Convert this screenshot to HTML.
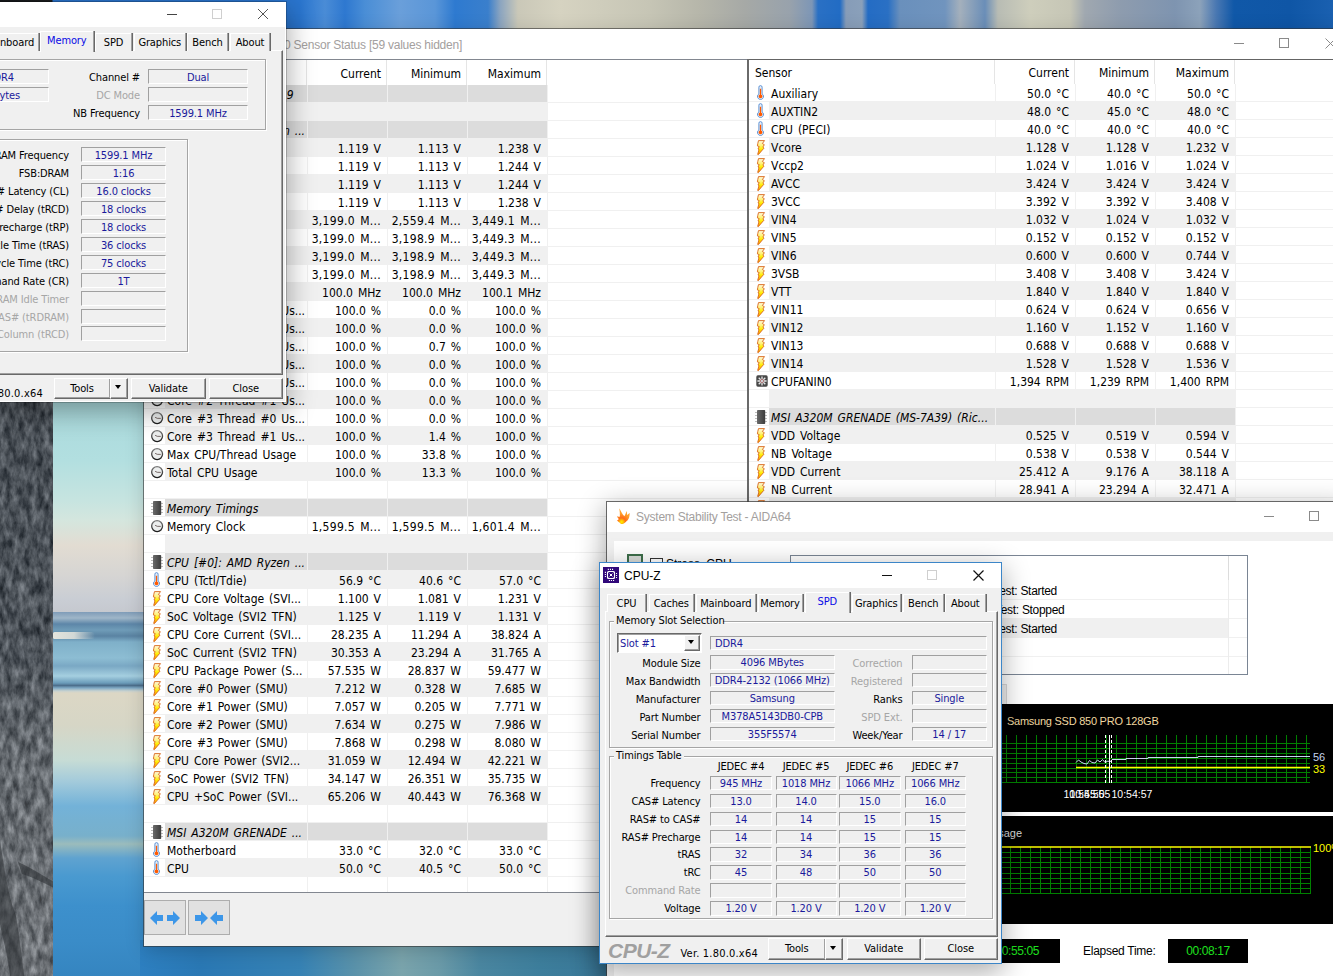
<!DOCTYPE html>
<html lang="en"><head><meta charset="utf-8"><title>Desktop</title>
<style>
html,body{margin:0;padding:0}
body{width:1333px;height:976px;overflow:hidden;position:relative;background:#3a7fb4;font:12px "DejaVu Sans Condensed","Liberation Sans",sans-serif;color:#000;word-spacing:1.5px}
div,span,i,svg,b{position:absolute;box-sizing:border-box;white-space:nowrap}
.ic{overflow:visible}
/* ---------- generic Win10 window ---------- */
.win{background:#fff;box-shadow:0 0 0 1px rgba(60,60,60,.75),0 7px 26px 2px rgba(0,0,0,.33)}
.tbar{left:0;top:0;right:0;height:30px;background:#fff}
.ttl{font:12px "Liberation Sans",sans-serif;color:#a3a09e;word-spacing:0;line-height:16px;letter-spacing:-.24px}
.wmin{width:10px;height:1px;background:#8a8a8a}
.wmax{width:10px;height:10px;border:1px solid #8a8a8a}
.wx{overflow:visible}
.wx path{stroke:#8a8a8a;stroke-width:1;fill:none}
/* ---------- HWiNFO ---------- */
#hw{left:144px;top:29px;width:1200px;height:917px;box-shadow:0 0 0 1px rgba(50,50,50,.6),0 4px 18px 0 rgba(0,0,0,.18)}
#hw .tbar{height:30px}
.lv{background:#fff;overflow:hidden}
#lp{box-shadow:inset 0 1px 0 #828790,inset 0 -1px 0 #828790}
#rp{box-shadow:inset 0 1px 0 #646464}
#rp:after{content:"";position:absolute;left:0;top:0;width:2px;height:100%;background:#6a6a6a}
.hd{left:0;top:1px;right:0}
.hd span{top:0;height:100%;border-right:1px solid #e5e5e5;line-height:28px}
#rp .hd span{line-height:26px}
.hl{padding-left:8px}
.hr{text-align:right;padding-right:5px}
.r{left:0;right:0;height:18px;border-bottom:1px solid #f0f0f0}
.r span{top:0;height:17px;line-height:20px;overflow:hidden}
.c0{padding-left:2px}
.cv{text-align:right;padding-right:7px}
.a span{background:#f0f0f0}
.s span{background:#dcdcdc;border-right:1px solid #f0f0f0}
.vl{width:1px;bottom:1px;background:#f0f0f0}
.s .c0{font-style:italic}
.tb2{left:0;top:864px;right:0;height:53px;background:#f0f0f0}
.tbtn{top:7px;width:42px;height:35px;background:#e1e1e1;border:1px solid #adadad}
.tbtn svg{left:5px;top:8px}
.tbtn path{fill:#3c96e8}
/* ---------- CPU-Z ---------- */
.cz{background:#f0f0f0;color:#000;font-size:11px;word-spacing:0;letter-spacing:-.12px}
.cz .tbar{height:25px}
.f{height:15px;line-height:14.5px;border:1px solid;border-color:#a0a0a0 #fff #fff #a0a0a0;color:#1a1a9c;text-align:center;overflow:hidden;background:#f0f0f0}
.fl{text-align:left;padding-left:4px}
.lb{text-align:right;height:16px;line-height:17px}
.dis{color:#a6a6a6}
.gb{border:1px solid #a5a5a5;box-shadow:1px 1px 0 #fff,inset 1px 1px 0 #fff}
.gbl{background:#f0f0f0;padding:0 2px;height:14px;line-height:14px}
.tab{height:18px;line-height:17px;text-align:center;border-left:1px solid #fff;border-top:1px solid #fff;box-shadow:1px 0 0 #a0a0a0,2px 0 0 #696969;background:#f0f0f0}
.tab.on{color:#0a0ae6;height:21px;line-height:18px;z-index:2}
.tp{border:1px solid;border-color:#fff #696969 #696969 #fff;box-shadow:inset -1px -1px 0 #a0a0a0}
.btn{height:21px;line-height:19px;text-align:center;background:#f0f0f0;border:1px solid;border-color:#fff #696969 #696969 #fff;box-shadow:inset -1px -1px 0 #a0a0a0}
.arr{width:0;height:0;border:3.5px solid transparent;border-top:4px solid #000;border-bottom:0;margin-top:-1px}
/* ---------- Stability test ---------- */
#st{left:607px;top:502px;width:740px;height:490px;background:#f0f0f0;font:12px "Liberation Sans",sans-serif;word-spacing:0}
#st .tbar{height:30px}
.blk{background:#000}
.g{fill:none;stroke:#008000;stroke-width:1;shape-rendering:crispEdges}

.w{letter-spacing:.3px}
#cm .f{line-height:15.5px}

</style></head>
<body>
<svg width="0" height="0" style="position:absolute"><defs>
<linearGradient id="gy" x1="0" y1="0" x2="0" y2="1"><stop offset="0" stop-color="#fffbe0"/><stop offset=".35" stop-color="#fff27a"/><stop offset=".6" stop-color="#ffee00"/><stop offset="1" stop-color="#ff9000"/></linearGradient>
<radialGradient id="gc" cx=".4" cy=".35" r=".8"><stop offset="0" stop-color="#fff"/><stop offset="1" stop-color="#d2d2d2"/></radialGradient>
<linearGradient id="gs" x1="0" y1="0" x2="0" y2="1"><stop offset="0" stop-color="#7a7a7a"/><stop offset="1" stop-color="#1c1c1c"/></linearGradient><linearGradient id="gk" x1="0" y1="0" x2="1" y2="0"><stop offset="0" stop-color="#6a6a6a"/><stop offset="1" stop-color="#3c3c3c"/></linearGradient>
</defs></svg>
<div id="sky" style="left:0;top:0;width:1333px;height:31px;background:linear-gradient(90deg,#16181a 0px,#1c1e20 52px,#2a74cc 53px,#2a76d0 300px,#4a8cd6 325px,#2e78d0 345px,#4a8ed6 365px,#6a9fda 400px,#5a96d8 435px,#2e7ad0 455px,#3a7fcc 488px,#8aa4c0 500px,#cac8b8 518px,#d6d3c1 560px,#cfcdbc 600px,#c6c5b5 650px,#b6b6aa 700px,#a6a9a6 745px,#98a2ac 790px,#7d96b6 812px,#2a70c4 818px,#226cc4 840px,#869cb8 846px,#8aa0ba 862px,#246cc4 868px,#2a70c4 888px,#6a90bc 900px,#7094be 945px,#a4b0bc 960px,#6a8eb8 985px,#b8bcb4 998px,#cecebc 1030px,#c6c6b6 1070px,#a0a8b0 1085px,#8e9cae 1120px,#7e94b0 1175px,#8ca2ba 1200px,#4a78b2 1216px,#1058a8 1234px,#0f56a6 1290px,#1a60b0 1333px)"></div>
<svg id="rock" style="left:0;top:396px" width="54" height="580"><defs><filter id="rk" x="0" y="0" width="100%" height="100%" color-interpolation-filters="sRGB"><feTurbulence type="fractalNoise" baseFrequency="0.16 0.07" numOctaves="4" seed="7"/><feColorMatrix type="matrix" values="1.05 0 0 0 -.185 1.05 0 0 0 -.165 1.05 0 0 0 -.14 0 0 0 0 1"/></filter><linearGradient id="rg" x1="0" y1="0" x2="0" y2="1"><stop offset="0" stop-color="#3a4148"/><stop offset=".45" stop-color="#454c53"/><stop offset=".62" stop-color="#72777b"/><stop offset="1" stop-color="#85888b"/></linearGradient></defs><rect width="54" height="580" fill="url(#rg)"/><rect width="54" height="580" filter="url(#rk)" opacity=".5"/><path d="M0 445C4 470 8 500 16 520C20 545 22 560 24 580H10C8 560 2 540 0 528ZM18 466C28 470 40 478 54 486V492C42 486 30 480 22 478Z" fill="#2c2f33" opacity=".55"/></svg>
<div id="sea" style="left:53px;top:396px;width:93px;height:580px;background:linear-gradient(180deg,#a9d9dc 0,#b2dfe0 64px,#c6e4e0 104px,#d4e6de 124px,#e2dcd2 149px,#d6d5d3 179px,#c9cdd4 204px,#c6c9cf 215.5px,#7f9cb8 216px,#9fb6c8 222px,#5d86a8 228px,#6f9cb8 234px,#5a83a2 240px,#7fb0c9 246px,#8dbdd3 262px,#7aa8c4 270px,#a5cfe0 280px,#6b9cba 287px,#4d6f8c 289.5px,#7fa9c4 292px,#c8d2d0 295px,#dcd7c5 297px,#d6d6c6 330px,#c7dcd5 364px,#a4cbdb 385px,#73b2d8 410px,#78b0cb 440px,#9bbcbc 448px,#5fa3d0 462px,#4a9ad0 480px,#3d90cc 510px,#3a8cc8 545px,#3585c0 580px)"><div style="left:0;top:236px;width:42px;height:7px;border-radius:2px 5px 4px 2px;background:linear-gradient(90deg,#e4e4dc,#d2d8d6 50%,rgba(130,165,188,0))"></div></div>
<div id="bot" style="left:140px;top:940px;width:480px;height:36px;background:linear-gradient(90deg,#2d7fc0 0,#2a78b4 60px,#3682b4 160px,#5a92aa 215px,#7aa4ac 262px,#6a9aa8 300px,#4a86a0 340px,#3d7e9c 400px,#3a7898 460px)"></div>
<div id="hw" class="win">
<div class="tbar"><span class="ttl" id="hwt" style="right:882px;top:8px">HWiNFO64 v5.60-3250 Sensor Status [59 values hidden]</span><i class="wmin" style="left:1090px;top:14px"></i><i class="wmax" style="left:1135px;top:9px"></i><svg class="wx" style="left:1181px;top:9px" width="11" height="11"><path d="M0.5 0.5L10.5 10.5M10.5 0.5L0.5 10.5"/></svg></div>
<div id="lp" class="lv" style="left:0px;top:30px;width:603px;height:834px">
<div class="hd" style="height:25px"><span class="hl" style="left:0px;width:163px"></span><span class="hr" style="left:163px;width:80px">Current</span><span class="hr" style="left:243px;width:80px">Minimum</span><span class="hr" style="left:323px;width:80px">Maximum</span></div>
<i class="vl" style="left:163px;top:26px"></i><i class="vl" style="left:243px;top:26px"></i><i class="vl" style="left:323px;top:26px"></i><i class="vl" style="left:403px;top:26px"></i>
<div class="r s" style="top:26px"><svg class="ic" style="left:7px;top:2px" width="12" height="14" viewBox="0 0 12 14"><path d="M0 2.5H12M0 5.5H12M0 8.5H12M0 11.5H12" stroke="#bdbdbd" stroke-width="1"/><rect x="2" y="0" width="8.2" height="14" rx=".8" fill="url(#gk)"/></svg><span class="c0" style="left:21px;width:143px;letter-spacing:.3px">System: MSI MS-7A39</span><span class="cv" style="left:164px;width:80px"></span><span class="cv" style="left:244px;width:80px"></span><span class="cv" style="left:324px;width:80px"></span></div>
<div class="r a" style="top:44px"><span class="c0" style="left:21px;width:143px"></span><span class="cv" style="left:164px;width:80px"></span><span class="cv" style="left:244px;width:80px"></span><span class="cv" style="left:324px;width:80px"></span></div>
<div class="r s" style="top:62px"><svg class="ic" style="left:7px;top:2px" width="12" height="14" viewBox="0 0 12 14"><path d="M0 2.5H12M0 5.5H12M0 8.5H12M0 11.5H12" stroke="#bdbdbd" stroke-width="1"/><rect x="2" y="0" width="8.2" height="14" rx=".8" fill="url(#gk)"/></svg><span class="c0" style="left:21px;width:143px">CPU [#0]: AMD Ryzen ...</span><span class="cv" style="left:164px;width:80px"></span><span class="cv" style="left:244px;width:80px"></span><span class="cv" style="left:324px;width:80px"></span></div>
<div class="r a" style="top:80px"><svg class="ic" style="left:9px;top:2px" width="8" height="15" viewBox="0 0 8 15"><path d="M1.5 .6H7.5L5.4 3.5L7.3 4.7L5.9 7L6.9 8.2L1.4 14.6L.7 14.4L2 9.5L1 9L2.2 6.6L.4 5.9L.8 3.4Z" fill="url(#gy)" stroke="#d8651a" stroke-width=".9" stroke-linejoin="round"/></svg><span class="c0" style="left:21px;width:143px">Core #0 VID</span><span class="cv" style="left:164px;width:80px">1.119 V</span><span class="cv" style="left:244px;width:80px">1.113 V</span><span class="cv" style="left:324px;width:80px">1.238 V</span></div>
<div class="r" style="top:98px"><svg class="ic" style="left:9px;top:2px" width="8" height="15" viewBox="0 0 8 15"><path d="M1.5 .6H7.5L5.4 3.5L7.3 4.7L5.9 7L6.9 8.2L1.4 14.6L.7 14.4L2 9.5L1 9L2.2 6.6L.4 5.9L.8 3.4Z" fill="url(#gy)" stroke="#d8651a" stroke-width=".9" stroke-linejoin="round"/></svg><span class="c0" style="left:21px;width:143px">Core #1 VID</span><span class="cv" style="left:164px;width:80px">1.119 V</span><span class="cv" style="left:244px;width:80px">1.113 V</span><span class="cv" style="left:324px;width:80px">1.244 V</span></div>
<div class="r a" style="top:116px"><svg class="ic" style="left:9px;top:2px" width="8" height="15" viewBox="0 0 8 15"><path d="M1.5 .6H7.5L5.4 3.5L7.3 4.7L5.9 7L6.9 8.2L1.4 14.6L.7 14.4L2 9.5L1 9L2.2 6.6L.4 5.9L.8 3.4Z" fill="url(#gy)" stroke="#d8651a" stroke-width=".9" stroke-linejoin="round"/></svg><span class="c0" style="left:21px;width:143px">Core #2 VID</span><span class="cv" style="left:164px;width:80px">1.119 V</span><span class="cv" style="left:244px;width:80px">1.113 V</span><span class="cv" style="left:324px;width:80px">1.244 V</span></div>
<div class="r" style="top:134px"><svg class="ic" style="left:9px;top:2px" width="8" height="15" viewBox="0 0 8 15"><path d="M1.5 .6H7.5L5.4 3.5L7.3 4.7L5.9 7L6.9 8.2L1.4 14.6L.7 14.4L2 9.5L1 9L2.2 6.6L.4 5.9L.8 3.4Z" fill="url(#gy)" stroke="#d8651a" stroke-width=".9" stroke-linejoin="round"/></svg><span class="c0" style="left:21px;width:143px">Core #3 VID</span><span class="cv" style="left:164px;width:80px">1.119 V</span><span class="cv" style="left:244px;width:80px">1.113 V</span><span class="cv" style="left:324px;width:80px">1.238 V</span></div>
<div class="r a" style="top:152px"><svg class="ic" style="left:7px;top:3px" width="13" height="13" viewBox="0 0 13 13"><circle cx="6.1" cy="6.1" r="5.45" fill="#eceeee" stroke="url(#gs)" stroke-width="1.3"/><path d="M4.1 5.3L6.2 6.3L9.8 6.4" fill="none" stroke="#6a5a58" stroke-width=".9"/></svg><span class="c0" style="left:21px;width:143px">Core #0 Clock</span><span class="cv w" style="left:164px;width:80px">3,199.0 M...</span><span class="cv w" style="left:244px;width:80px">2,559.4 M...</span><span class="cv w" style="left:324px;width:80px">3,449.1 M...</span></div>
<div class="r" style="top:170px"><svg class="ic" style="left:7px;top:3px" width="13" height="13" viewBox="0 0 13 13"><circle cx="6.1" cy="6.1" r="5.45" fill="#eceeee" stroke="url(#gs)" stroke-width="1.3"/><path d="M4.1 5.3L6.2 6.3L9.8 6.4" fill="none" stroke="#6a5a58" stroke-width=".9"/></svg><span class="c0" style="left:21px;width:143px">Core #1 Clock</span><span class="cv w" style="left:164px;width:80px">3,199.0 M...</span><span class="cv w" style="left:244px;width:80px">3,198.9 M...</span><span class="cv w" style="left:324px;width:80px">3,449.3 M...</span></div>
<div class="r a" style="top:188px"><svg class="ic" style="left:7px;top:3px" width="13" height="13" viewBox="0 0 13 13"><circle cx="6.1" cy="6.1" r="5.45" fill="#eceeee" stroke="url(#gs)" stroke-width="1.3"/><path d="M4.1 5.3L6.2 6.3L9.8 6.4" fill="none" stroke="#6a5a58" stroke-width=".9"/></svg><span class="c0" style="left:21px;width:143px">Core #2 Clock</span><span class="cv w" style="left:164px;width:80px">3,199.0 M...</span><span class="cv w" style="left:244px;width:80px">3,198.9 M...</span><span class="cv w" style="left:324px;width:80px">3,449.3 M...</span></div>
<div class="r" style="top:206px"><svg class="ic" style="left:7px;top:3px" width="13" height="13" viewBox="0 0 13 13"><circle cx="6.1" cy="6.1" r="5.45" fill="#eceeee" stroke="url(#gs)" stroke-width="1.3"/><path d="M4.1 5.3L6.2 6.3L9.8 6.4" fill="none" stroke="#6a5a58" stroke-width=".9"/></svg><span class="c0" style="left:21px;width:143px">Core #3 Clock</span><span class="cv w" style="left:164px;width:80px">3,199.0 M...</span><span class="cv w" style="left:244px;width:80px">3,198.9 M...</span><span class="cv w" style="left:324px;width:80px">3,449.3 M...</span></div>
<div class="r a" style="top:224px"><svg class="ic" style="left:7px;top:3px" width="13" height="13" viewBox="0 0 13 13"><circle cx="6.1" cy="6.1" r="5.45" fill="#eceeee" stroke="url(#gs)" stroke-width="1.3"/><path d="M4.1 5.3L6.2 6.3L9.8 6.4" fill="none" stroke="#6a5a58" stroke-width=".9"/></svg><span class="c0" style="left:21px;width:143px">Bus Clock</span><span class="cv" style="left:164px;width:80px">100.0 MHz</span><span class="cv" style="left:244px;width:80px">100.0 MHz</span><span class="cv" style="left:324px;width:80px">100.1 MHz</span></div>
<div class="r" style="top:242px"><svg class="ic" style="left:7px;top:3px" width="13" height="13" viewBox="0 0 13 13"><circle cx="6.1" cy="6.1" r="5.45" fill="#eceeee" stroke="url(#gs)" stroke-width="1.3"/><path d="M4.1 5.3L6.2 6.3L9.8 6.4" fill="none" stroke="#6a5a58" stroke-width=".9"/></svg><span class="c0" style="left:21px;width:143px">Core #0 Thread #0 Us...</span><span class="cv" style="left:164px;width:80px">100.0 %</span><span class="cv" style="left:244px;width:80px">0.0 %</span><span class="cv" style="left:324px;width:80px">100.0 %</span></div>
<div class="r a" style="top:260px"><svg class="ic" style="left:7px;top:3px" width="13" height="13" viewBox="0 0 13 13"><circle cx="6.1" cy="6.1" r="5.45" fill="#eceeee" stroke="url(#gs)" stroke-width="1.3"/><path d="M4.1 5.3L6.2 6.3L9.8 6.4" fill="none" stroke="#6a5a58" stroke-width=".9"/></svg><span class="c0" style="left:21px;width:143px">Core #0 Thread #1 Us...</span><span class="cv" style="left:164px;width:80px">100.0 %</span><span class="cv" style="left:244px;width:80px">0.0 %</span><span class="cv" style="left:324px;width:80px">100.0 %</span></div>
<div class="r" style="top:278px"><svg class="ic" style="left:7px;top:3px" width="13" height="13" viewBox="0 0 13 13"><circle cx="6.1" cy="6.1" r="5.45" fill="#eceeee" stroke="url(#gs)" stroke-width="1.3"/><path d="M4.1 5.3L6.2 6.3L9.8 6.4" fill="none" stroke="#6a5a58" stroke-width=".9"/></svg><span class="c0" style="left:21px;width:143px">Core #1 Thread #0 Us...</span><span class="cv" style="left:164px;width:80px">100.0 %</span><span class="cv" style="left:244px;width:80px">0.7 %</span><span class="cv" style="left:324px;width:80px">100.0 %</span></div>
<div class="r a" style="top:296px"><svg class="ic" style="left:7px;top:3px" width="13" height="13" viewBox="0 0 13 13"><circle cx="6.1" cy="6.1" r="5.45" fill="#eceeee" stroke="url(#gs)" stroke-width="1.3"/><path d="M4.1 5.3L6.2 6.3L9.8 6.4" fill="none" stroke="#6a5a58" stroke-width=".9"/></svg><span class="c0" style="left:21px;width:143px">Core #1 Thread #1 Us...</span><span class="cv" style="left:164px;width:80px">100.0 %</span><span class="cv" style="left:244px;width:80px">0.0 %</span><span class="cv" style="left:324px;width:80px">100.0 %</span></div>
<div class="r" style="top:314px"><svg class="ic" style="left:7px;top:3px" width="13" height="13" viewBox="0 0 13 13"><circle cx="6.1" cy="6.1" r="5.45" fill="#eceeee" stroke="url(#gs)" stroke-width="1.3"/><path d="M4.1 5.3L6.2 6.3L9.8 6.4" fill="none" stroke="#6a5a58" stroke-width=".9"/></svg><span class="c0" style="left:21px;width:143px">Core #2 Thread #0 Us...</span><span class="cv" style="left:164px;width:80px">100.0 %</span><span class="cv" style="left:244px;width:80px">0.0 %</span><span class="cv" style="left:324px;width:80px">100.0 %</span></div>
<div class="r a" style="top:332px"><svg class="ic" style="left:7px;top:3px" width="13" height="13" viewBox="0 0 13 13"><circle cx="6.1" cy="6.1" r="5.45" fill="#eceeee" stroke="url(#gs)" stroke-width="1.3"/><path d="M4.1 5.3L6.2 6.3L9.8 6.4" fill="none" stroke="#6a5a58" stroke-width=".9"/></svg><span class="c0" style="left:21px;width:143px">Core #2 Thread #1 Us...</span><span class="cv" style="left:164px;width:80px">100.0 %</span><span class="cv" style="left:244px;width:80px">0.0 %</span><span class="cv" style="left:324px;width:80px">100.0 %</span></div>
<div class="r" style="top:350px"><svg class="ic" style="left:7px;top:3px" width="13" height="13" viewBox="0 0 13 13"><circle cx="6.1" cy="6.1" r="5.45" fill="#eceeee" stroke="url(#gs)" stroke-width="1.3"/><path d="M4.1 5.3L6.2 6.3L9.8 6.4" fill="none" stroke="#6a5a58" stroke-width=".9"/></svg><span class="c0" style="left:21px;width:143px">Core #3 Thread #0 Us...</span><span class="cv" style="left:164px;width:80px">100.0 %</span><span class="cv" style="left:244px;width:80px">0.0 %</span><span class="cv" style="left:324px;width:80px">100.0 %</span></div>
<div class="r a" style="top:368px"><svg class="ic" style="left:7px;top:3px" width="13" height="13" viewBox="0 0 13 13"><circle cx="6.1" cy="6.1" r="5.45" fill="#eceeee" stroke="url(#gs)" stroke-width="1.3"/><path d="M4.1 5.3L6.2 6.3L9.8 6.4" fill="none" stroke="#6a5a58" stroke-width=".9"/></svg><span class="c0" style="left:21px;width:143px">Core #3 Thread #1 Us...</span><span class="cv" style="left:164px;width:80px">100.0 %</span><span class="cv" style="left:244px;width:80px">1.4 %</span><span class="cv" style="left:324px;width:80px">100.0 %</span></div>
<div class="r" style="top:386px"><svg class="ic" style="left:7px;top:3px" width="13" height="13" viewBox="0 0 13 13"><circle cx="6.1" cy="6.1" r="5.45" fill="#eceeee" stroke="url(#gs)" stroke-width="1.3"/><path d="M4.1 5.3L6.2 6.3L9.8 6.4" fill="none" stroke="#6a5a58" stroke-width=".9"/></svg><span class="c0" style="left:21px;width:143px">Max CPU/Thread Usage</span><span class="cv" style="left:164px;width:80px">100.0 %</span><span class="cv" style="left:244px;width:80px">33.8 %</span><span class="cv" style="left:324px;width:80px">100.0 %</span></div>
<div class="r a" style="top:404px"><svg class="ic" style="left:7px;top:3px" width="13" height="13" viewBox="0 0 13 13"><circle cx="6.1" cy="6.1" r="5.45" fill="#eceeee" stroke="url(#gs)" stroke-width="1.3"/><path d="M4.1 5.3L6.2 6.3L9.8 6.4" fill="none" stroke="#6a5a58" stroke-width=".9"/></svg><span class="c0" style="left:21px;width:143px">Total CPU Usage</span><span class="cv" style="left:164px;width:80px">100.0 %</span><span class="cv" style="left:244px;width:80px">13.3 %</span><span class="cv" style="left:324px;width:80px">100.0 %</span></div>
<div class="r" style="top:422px"><span class="c0" style="left:21px;width:143px"></span><span class="cv" style="left:164px;width:80px"></span><span class="cv" style="left:244px;width:80px"></span><span class="cv" style="left:324px;width:80px"></span></div>
<div class="r s" style="top:440px"><svg class="ic" style="left:7px;top:2px" width="12" height="14" viewBox="0 0 12 14"><path d="M0 2.5H12M0 5.5H12M0 8.5H12M0 11.5H12" stroke="#bdbdbd" stroke-width="1"/><rect x="2" y="0" width="8.2" height="14" rx=".8" fill="url(#gk)"/></svg><span class="c0" style="left:21px;width:143px">Memory Timings</span><span class="cv" style="left:164px;width:80px"></span><span class="cv" style="left:244px;width:80px"></span><span class="cv" style="left:324px;width:80px"></span></div>
<div class="r" style="top:458px"><svg class="ic" style="left:7px;top:3px" width="13" height="13" viewBox="0 0 13 13"><circle cx="6.1" cy="6.1" r="5.45" fill="#eceeee" stroke="url(#gs)" stroke-width="1.3"/><path d="M4.1 5.3L6.2 6.3L9.8 6.4" fill="none" stroke="#6a5a58" stroke-width=".9"/></svg><span class="c0" style="left:21px;width:143px">Memory Clock</span><span class="cv w" style="left:164px;width:80px">1,599.5 M...</span><span class="cv w" style="left:244px;width:80px">1,599.5 M...</span><span class="cv w" style="left:324px;width:80px">1,601.4 M...</span></div>
<div class="r a" style="top:476px"><span class="c0" style="left:21px;width:143px"></span><span class="cv" style="left:164px;width:80px"></span><span class="cv" style="left:244px;width:80px"></span><span class="cv" style="left:324px;width:80px"></span></div>
<div class="r s" style="top:494px"><svg class="ic" style="left:7px;top:2px" width="12" height="14" viewBox="0 0 12 14"><path d="M0 2.5H12M0 5.5H12M0 8.5H12M0 11.5H12" stroke="#bdbdbd" stroke-width="1"/><rect x="2" y="0" width="8.2" height="14" rx=".8" fill="url(#gk)"/></svg><span class="c0" style="left:21px;width:143px">CPU [#0]: AMD Ryzen ...</span><span class="cv" style="left:164px;width:80px"></span><span class="cv" style="left:244px;width:80px"></span><span class="cv" style="left:324px;width:80px"></span></div>
<div class="r a" style="top:512px"><svg class="ic" style="left:9px;top:1px" width="7" height="15" viewBox="0 0 7 15"><path d="M1.9 2.2a1.6 1.6 0 0 1 3.2 0V8.9a3 3 0 1 1-3.2 0Z" fill="#e6effa" stroke="#5f93d4" stroke-width="1"/><path d="M2.9 3.8h1.2v5.8a1.9 1.9 0 1 1-1.2 0Z" fill="#ff5a00"/></svg><span class="c0" style="left:21px;width:143px">CPU (Tctl/Tdie)</span><span class="cv" style="left:164px;width:80px">56.9 °C</span><span class="cv" style="left:244px;width:80px">40.6 °C</span><span class="cv" style="left:324px;width:80px">57.0 °C</span></div>
<div class="r" style="top:530px"><svg class="ic" style="left:9px;top:2px" width="8" height="15" viewBox="0 0 8 15"><path d="M1.5 .6H7.5L5.4 3.5L7.3 4.7L5.9 7L6.9 8.2L1.4 14.6L.7 14.4L2 9.5L1 9L2.2 6.6L.4 5.9L.8 3.4Z" fill="url(#gy)" stroke="#d8651a" stroke-width=".9" stroke-linejoin="round"/></svg><span class="c0" style="left:21px;width:143px">CPU Core Voltage (SVI...</span><span class="cv" style="left:164px;width:80px">1.100 V</span><span class="cv" style="left:244px;width:80px">1.081 V</span><span class="cv" style="left:324px;width:80px">1.231 V</span></div>
<div class="r a" style="top:548px"><svg class="ic" style="left:9px;top:2px" width="8" height="15" viewBox="0 0 8 15"><path d="M1.5 .6H7.5L5.4 3.5L7.3 4.7L5.9 7L6.9 8.2L1.4 14.6L.7 14.4L2 9.5L1 9L2.2 6.6L.4 5.9L.8 3.4Z" fill="url(#gy)" stroke="#d8651a" stroke-width=".9" stroke-linejoin="round"/></svg><span class="c0" style="left:21px;width:143px">SoC Voltage (SVI2 TFN)</span><span class="cv" style="left:164px;width:80px">1.125 V</span><span class="cv" style="left:244px;width:80px">1.119 V</span><span class="cv" style="left:324px;width:80px">1.131 V</span></div>
<div class="r" style="top:566px"><svg class="ic" style="left:9px;top:2px" width="8" height="15" viewBox="0 0 8 15"><path d="M1.5 .6H7.5L5.4 3.5L7.3 4.7L5.9 7L6.9 8.2L1.4 14.6L.7 14.4L2 9.5L1 9L2.2 6.6L.4 5.9L.8 3.4Z" fill="url(#gy)" stroke="#d8651a" stroke-width=".9" stroke-linejoin="round"/></svg><span class="c0" style="left:21px;width:143px">CPU Core Current (SVI...</span><span class="cv" style="left:164px;width:80px">28.235 A</span><span class="cv" style="left:244px;width:80px">11.294 A</span><span class="cv" style="left:324px;width:80px">38.824 A</span></div>
<div class="r a" style="top:584px"><svg class="ic" style="left:9px;top:2px" width="8" height="15" viewBox="0 0 8 15"><path d="M1.5 .6H7.5L5.4 3.5L7.3 4.7L5.9 7L6.9 8.2L1.4 14.6L.7 14.4L2 9.5L1 9L2.2 6.6L.4 5.9L.8 3.4Z" fill="url(#gy)" stroke="#d8651a" stroke-width=".9" stroke-linejoin="round"/></svg><span class="c0" style="left:21px;width:143px">SoC Current (SVI2 TFN)</span><span class="cv" style="left:164px;width:80px">30.353 A</span><span class="cv" style="left:244px;width:80px">23.294 A</span><span class="cv" style="left:324px;width:80px">31.765 A</span></div>
<div class="r" style="top:602px"><svg class="ic" style="left:9px;top:2px" width="8" height="15" viewBox="0 0 8 15"><path d="M1.5 .6H7.5L5.4 3.5L7.3 4.7L5.9 7L6.9 8.2L1.4 14.6L.7 14.4L2 9.5L1 9L2.2 6.6L.4 5.9L.8 3.4Z" fill="url(#gy)" stroke="#d8651a" stroke-width=".9" stroke-linejoin="round"/></svg><span class="c0" style="left:21px;width:143px">CPU Package Power (S...</span><span class="cv" style="left:164px;width:80px">57.535 W</span><span class="cv" style="left:244px;width:80px">28.837 W</span><span class="cv" style="left:324px;width:80px">59.477 W</span></div>
<div class="r a" style="top:620px"><svg class="ic" style="left:9px;top:2px" width="8" height="15" viewBox="0 0 8 15"><path d="M1.5 .6H7.5L5.4 3.5L7.3 4.7L5.9 7L6.9 8.2L1.4 14.6L.7 14.4L2 9.5L1 9L2.2 6.6L.4 5.9L.8 3.4Z" fill="url(#gy)" stroke="#d8651a" stroke-width=".9" stroke-linejoin="round"/></svg><span class="c0" style="left:21px;width:143px">Core #0 Power (SMU)</span><span class="cv" style="left:164px;width:80px">7.212 W</span><span class="cv" style="left:244px;width:80px">0.328 W</span><span class="cv" style="left:324px;width:80px">7.685 W</span></div>
<div class="r" style="top:638px"><svg class="ic" style="left:9px;top:2px" width="8" height="15" viewBox="0 0 8 15"><path d="M1.5 .6H7.5L5.4 3.5L7.3 4.7L5.9 7L6.9 8.2L1.4 14.6L.7 14.4L2 9.5L1 9L2.2 6.6L.4 5.9L.8 3.4Z" fill="url(#gy)" stroke="#d8651a" stroke-width=".9" stroke-linejoin="round"/></svg><span class="c0" style="left:21px;width:143px">Core #1 Power (SMU)</span><span class="cv" style="left:164px;width:80px">7.057 W</span><span class="cv" style="left:244px;width:80px">0.205 W</span><span class="cv" style="left:324px;width:80px">7.771 W</span></div>
<div class="r a" style="top:656px"><svg class="ic" style="left:9px;top:2px" width="8" height="15" viewBox="0 0 8 15"><path d="M1.5 .6H7.5L5.4 3.5L7.3 4.7L5.9 7L6.9 8.2L1.4 14.6L.7 14.4L2 9.5L1 9L2.2 6.6L.4 5.9L.8 3.4Z" fill="url(#gy)" stroke="#d8651a" stroke-width=".9" stroke-linejoin="round"/></svg><span class="c0" style="left:21px;width:143px">Core #2 Power (SMU)</span><span class="cv" style="left:164px;width:80px">7.634 W</span><span class="cv" style="left:244px;width:80px">0.275 W</span><span class="cv" style="left:324px;width:80px">7.986 W</span></div>
<div class="r" style="top:674px"><svg class="ic" style="left:9px;top:2px" width="8" height="15" viewBox="0 0 8 15"><path d="M1.5 .6H7.5L5.4 3.5L7.3 4.7L5.9 7L6.9 8.2L1.4 14.6L.7 14.4L2 9.5L1 9L2.2 6.6L.4 5.9L.8 3.4Z" fill="url(#gy)" stroke="#d8651a" stroke-width=".9" stroke-linejoin="round"/></svg><span class="c0" style="left:21px;width:143px">Core #3 Power (SMU)</span><span class="cv" style="left:164px;width:80px">7.868 W</span><span class="cv" style="left:244px;width:80px">0.298 W</span><span class="cv" style="left:324px;width:80px">8.080 W</span></div>
<div class="r a" style="top:692px"><svg class="ic" style="left:9px;top:2px" width="8" height="15" viewBox="0 0 8 15"><path d="M1.5 .6H7.5L5.4 3.5L7.3 4.7L5.9 7L6.9 8.2L1.4 14.6L.7 14.4L2 9.5L1 9L2.2 6.6L.4 5.9L.8 3.4Z" fill="url(#gy)" stroke="#d8651a" stroke-width=".9" stroke-linejoin="round"/></svg><span class="c0" style="left:21px;width:143px">CPU Core Power (SVI2...</span><span class="cv" style="left:164px;width:80px">31.059 W</span><span class="cv" style="left:244px;width:80px">12.494 W</span><span class="cv" style="left:324px;width:80px">42.221 W</span></div>
<div class="r" style="top:710px"><svg class="ic" style="left:9px;top:2px" width="8" height="15" viewBox="0 0 8 15"><path d="M1.5 .6H7.5L5.4 3.5L7.3 4.7L5.9 7L6.9 8.2L1.4 14.6L.7 14.4L2 9.5L1 9L2.2 6.6L.4 5.9L.8 3.4Z" fill="url(#gy)" stroke="#d8651a" stroke-width=".9" stroke-linejoin="round"/></svg><span class="c0" style="left:21px;width:143px">SoC Power (SVI2 TFN)</span><span class="cv" style="left:164px;width:80px">34.147 W</span><span class="cv" style="left:244px;width:80px">26.351 W</span><span class="cv" style="left:324px;width:80px">35.735 W</span></div>
<div class="r a" style="top:728px"><svg class="ic" style="left:9px;top:2px" width="8" height="15" viewBox="0 0 8 15"><path d="M1.5 .6H7.5L5.4 3.5L7.3 4.7L5.9 7L6.9 8.2L1.4 14.6L.7 14.4L2 9.5L1 9L2.2 6.6L.4 5.9L.8 3.4Z" fill="url(#gy)" stroke="#d8651a" stroke-width=".9" stroke-linejoin="round"/></svg><span class="c0" style="left:21px;width:143px">CPU +SoC Power (SVI...</span><span class="cv" style="left:164px;width:80px">65.206 W</span><span class="cv" style="left:244px;width:80px">40.443 W</span><span class="cv" style="left:324px;width:80px">76.368 W</span></div>
<div class="r" style="top:746px"><span class="c0" style="left:21px;width:143px"></span><span class="cv" style="left:164px;width:80px"></span><span class="cv" style="left:244px;width:80px"></span><span class="cv" style="left:324px;width:80px"></span></div>
<div class="r s" style="top:764px"><svg class="ic" style="left:7px;top:2px" width="12" height="14" viewBox="0 0 12 14"><path d="M0 2.5H12M0 5.5H12M0 8.5H12M0 11.5H12" stroke="#bdbdbd" stroke-width="1"/><rect x="2" y="0" width="8.2" height="14" rx=".8" fill="url(#gk)"/></svg><span class="c0" style="left:21px;width:143px">MSI A320M GRENADE ...</span><span class="cv" style="left:164px;width:80px"></span><span class="cv" style="left:244px;width:80px"></span><span class="cv" style="left:324px;width:80px"></span></div>
<div class="r" style="top:782px"><svg class="ic" style="left:9px;top:1px" width="7" height="15" viewBox="0 0 7 15"><path d="M1.9 2.2a1.6 1.6 0 0 1 3.2 0V8.9a3 3 0 1 1-3.2 0Z" fill="#e6effa" stroke="#5f93d4" stroke-width="1"/><path d="M2.9 3.8h1.2v5.8a1.9 1.9 0 1 1-1.2 0Z" fill="#ff5a00"/></svg><span class="c0" style="left:21px;width:143px">Motherboard</span><span class="cv" style="left:164px;width:80px">33.0 °C</span><span class="cv" style="left:244px;width:80px">32.0 °C</span><span class="cv" style="left:324px;width:80px">33.0 °C</span></div>
<div class="r a" style="top:800px"><svg class="ic" style="left:9px;top:1px" width="7" height="15" viewBox="0 0 7 15"><path d="M1.9 2.2a1.6 1.6 0 0 1 3.2 0V8.9a3 3 0 1 1-3.2 0Z" fill="#e6effa" stroke="#5f93d4" stroke-width="1"/><path d="M2.9 3.8h1.2v5.8a1.9 1.9 0 1 1-1.2 0Z" fill="#ff5a00"/></svg><span class="c0" style="left:21px;width:143px">CPU</span><span class="cv" style="left:164px;width:80px">50.0 °C</span><span class="cv" style="left:244px;width:80px">40.5 °C</span><span class="cv" style="left:324px;width:80px">50.0 °C</span></div>
<div class="r" style="top:818px"><span class="c0" style="left:21px;width:143px"></span><span class="cv" style="left:164px;width:80px"></span><span class="cv" style="left:244px;width:80px"></span><span class="cv" style="left:324px;width:80px"></span></div>
</div>
<div id="rp" class="lv" style="left:603px;top:30px;width:601px;height:834px">
<div class="hd" style="height:24px"><span class="hl" style="left:0px;width:248px">Sensor</span><span class="hr" style="left:248px;width:80px">Current</span><span class="hr" style="left:328px;width:80px">Minimum</span><span class="hr" style="left:408px;width:80px">Maximum</span></div>
<i class="vl" style="left:248px;top:25px"></i><i class="vl" style="left:328px;top:25px"></i><i class="vl" style="left:408px;top:25px"></i><i class="vl" style="left:488px;top:25px"></i>
<div class="r" style="top:25px"><svg class="ic" style="left:10px;top:1px" width="7" height="15" viewBox="0 0 7 15"><path d="M1.9 2.2a1.6 1.6 0 0 1 3.2 0V8.9a3 3 0 1 1-3.2 0Z" fill="#e6effa" stroke="#5f93d4" stroke-width="1"/><path d="M2.9 3.8h1.2v5.8a1.9 1.9 0 1 1-1.2 0Z" fill="#ff5a00"/></svg><span class="c0" style="left:22px;width:227px">Auxiliary</span><span class="cv" style="left:249px;width:80px">50.0 °C</span><span class="cv" style="left:329px;width:80px">40.0 °C</span><span class="cv" style="left:409px;width:80px">50.0 °C</span></div>
<div class="r a" style="top:43px"><svg class="ic" style="left:10px;top:1px" width="7" height="15" viewBox="0 0 7 15"><path d="M1.9 2.2a1.6 1.6 0 0 1 3.2 0V8.9a3 3 0 1 1-3.2 0Z" fill="#e6effa" stroke="#5f93d4" stroke-width="1"/><path d="M2.9 3.8h1.2v5.8a1.9 1.9 0 1 1-1.2 0Z" fill="#ff5a00"/></svg><span class="c0" style="left:22px;width:227px">AUXTIN2</span><span class="cv" style="left:249px;width:80px">48.0 °C</span><span class="cv" style="left:329px;width:80px">45.0 °C</span><span class="cv" style="left:409px;width:80px">48.0 °C</span></div>
<div class="r" style="top:61px"><svg class="ic" style="left:10px;top:1px" width="7" height="15" viewBox="0 0 7 15"><path d="M1.9 2.2a1.6 1.6 0 0 1 3.2 0V8.9a3 3 0 1 1-3.2 0Z" fill="#e6effa" stroke="#5f93d4" stroke-width="1"/><path d="M2.9 3.8h1.2v5.8a1.9 1.9 0 1 1-1.2 0Z" fill="#ff5a00"/></svg><span class="c0" style="left:22px;width:227px">CPU (PECI)</span><span class="cv" style="left:249px;width:80px">40.0 °C</span><span class="cv" style="left:329px;width:80px">40.0 °C</span><span class="cv" style="left:409px;width:80px">40.0 °C</span></div>
<div class="r a" style="top:79px"><svg class="ic" style="left:10px;top:2px" width="8" height="15" viewBox="0 0 8 15"><path d="M1.5 .6H7.5L5.4 3.5L7.3 4.7L5.9 7L6.9 8.2L1.4 14.6L.7 14.4L2 9.5L1 9L2.2 6.6L.4 5.9L.8 3.4Z" fill="url(#gy)" stroke="#d8651a" stroke-width=".9" stroke-linejoin="round"/></svg><span class="c0" style="left:22px;width:227px">Vcore</span><span class="cv" style="left:249px;width:80px">1.128 V</span><span class="cv" style="left:329px;width:80px">1.128 V</span><span class="cv" style="left:409px;width:80px">1.232 V</span></div>
<div class="r" style="top:97px"><svg class="ic" style="left:10px;top:2px" width="8" height="15" viewBox="0 0 8 15"><path d="M1.5 .6H7.5L5.4 3.5L7.3 4.7L5.9 7L6.9 8.2L1.4 14.6L.7 14.4L2 9.5L1 9L2.2 6.6L.4 5.9L.8 3.4Z" fill="url(#gy)" stroke="#d8651a" stroke-width=".9" stroke-linejoin="round"/></svg><span class="c0" style="left:22px;width:227px">Vccp2</span><span class="cv" style="left:249px;width:80px">1.024 V</span><span class="cv" style="left:329px;width:80px">1.016 V</span><span class="cv" style="left:409px;width:80px">1.024 V</span></div>
<div class="r a" style="top:115px"><svg class="ic" style="left:10px;top:2px" width="8" height="15" viewBox="0 0 8 15"><path d="M1.5 .6H7.5L5.4 3.5L7.3 4.7L5.9 7L6.9 8.2L1.4 14.6L.7 14.4L2 9.5L1 9L2.2 6.6L.4 5.9L.8 3.4Z" fill="url(#gy)" stroke="#d8651a" stroke-width=".9" stroke-linejoin="round"/></svg><span class="c0" style="left:22px;width:227px">AVCC</span><span class="cv" style="left:249px;width:80px">3.424 V</span><span class="cv" style="left:329px;width:80px">3.424 V</span><span class="cv" style="left:409px;width:80px">3.424 V</span></div>
<div class="r" style="top:133px"><svg class="ic" style="left:10px;top:2px" width="8" height="15" viewBox="0 0 8 15"><path d="M1.5 .6H7.5L5.4 3.5L7.3 4.7L5.9 7L6.9 8.2L1.4 14.6L.7 14.4L2 9.5L1 9L2.2 6.6L.4 5.9L.8 3.4Z" fill="url(#gy)" stroke="#d8651a" stroke-width=".9" stroke-linejoin="round"/></svg><span class="c0" style="left:22px;width:227px">3VCC</span><span class="cv" style="left:249px;width:80px">3.392 V</span><span class="cv" style="left:329px;width:80px">3.392 V</span><span class="cv" style="left:409px;width:80px">3.408 V</span></div>
<div class="r a" style="top:151px"><svg class="ic" style="left:10px;top:2px" width="8" height="15" viewBox="0 0 8 15"><path d="M1.5 .6H7.5L5.4 3.5L7.3 4.7L5.9 7L6.9 8.2L1.4 14.6L.7 14.4L2 9.5L1 9L2.2 6.6L.4 5.9L.8 3.4Z" fill="url(#gy)" stroke="#d8651a" stroke-width=".9" stroke-linejoin="round"/></svg><span class="c0" style="left:22px;width:227px">VIN4</span><span class="cv" style="left:249px;width:80px">1.032 V</span><span class="cv" style="left:329px;width:80px">1.024 V</span><span class="cv" style="left:409px;width:80px">1.032 V</span></div>
<div class="r" style="top:169px"><svg class="ic" style="left:10px;top:2px" width="8" height="15" viewBox="0 0 8 15"><path d="M1.5 .6H7.5L5.4 3.5L7.3 4.7L5.9 7L6.9 8.2L1.4 14.6L.7 14.4L2 9.5L1 9L2.2 6.6L.4 5.9L.8 3.4Z" fill="url(#gy)" stroke="#d8651a" stroke-width=".9" stroke-linejoin="round"/></svg><span class="c0" style="left:22px;width:227px">VIN5</span><span class="cv" style="left:249px;width:80px">0.152 V</span><span class="cv" style="left:329px;width:80px">0.152 V</span><span class="cv" style="left:409px;width:80px">0.152 V</span></div>
<div class="r a" style="top:187px"><svg class="ic" style="left:10px;top:2px" width="8" height="15" viewBox="0 0 8 15"><path d="M1.5 .6H7.5L5.4 3.5L7.3 4.7L5.9 7L6.9 8.2L1.4 14.6L.7 14.4L2 9.5L1 9L2.2 6.6L.4 5.9L.8 3.4Z" fill="url(#gy)" stroke="#d8651a" stroke-width=".9" stroke-linejoin="round"/></svg><span class="c0" style="left:22px;width:227px">VIN6</span><span class="cv" style="left:249px;width:80px">0.600 V</span><span class="cv" style="left:329px;width:80px">0.600 V</span><span class="cv" style="left:409px;width:80px">0.744 V</span></div>
<div class="r" style="top:205px"><svg class="ic" style="left:10px;top:2px" width="8" height="15" viewBox="0 0 8 15"><path d="M1.5 .6H7.5L5.4 3.5L7.3 4.7L5.9 7L6.9 8.2L1.4 14.6L.7 14.4L2 9.5L1 9L2.2 6.6L.4 5.9L.8 3.4Z" fill="url(#gy)" stroke="#d8651a" stroke-width=".9" stroke-linejoin="round"/></svg><span class="c0" style="left:22px;width:227px">3VSB</span><span class="cv" style="left:249px;width:80px">3.408 V</span><span class="cv" style="left:329px;width:80px">3.408 V</span><span class="cv" style="left:409px;width:80px">3.424 V</span></div>
<div class="r a" style="top:223px"><svg class="ic" style="left:10px;top:2px" width="8" height="15" viewBox="0 0 8 15"><path d="M1.5 .6H7.5L5.4 3.5L7.3 4.7L5.9 7L6.9 8.2L1.4 14.6L.7 14.4L2 9.5L1 9L2.2 6.6L.4 5.9L.8 3.4Z" fill="url(#gy)" stroke="#d8651a" stroke-width=".9" stroke-linejoin="round"/></svg><span class="c0" style="left:22px;width:227px">VTT</span><span class="cv" style="left:249px;width:80px">1.840 V</span><span class="cv" style="left:329px;width:80px">1.840 V</span><span class="cv" style="left:409px;width:80px">1.840 V</span></div>
<div class="r" style="top:241px"><svg class="ic" style="left:10px;top:2px" width="8" height="15" viewBox="0 0 8 15"><path d="M1.5 .6H7.5L5.4 3.5L7.3 4.7L5.9 7L6.9 8.2L1.4 14.6L.7 14.4L2 9.5L1 9L2.2 6.6L.4 5.9L.8 3.4Z" fill="url(#gy)" stroke="#d8651a" stroke-width=".9" stroke-linejoin="round"/></svg><span class="c0" style="left:22px;width:227px">VIN11</span><span class="cv" style="left:249px;width:80px">0.624 V</span><span class="cv" style="left:329px;width:80px">0.624 V</span><span class="cv" style="left:409px;width:80px">0.656 V</span></div>
<div class="r a" style="top:259px"><svg class="ic" style="left:10px;top:2px" width="8" height="15" viewBox="0 0 8 15"><path d="M1.5 .6H7.5L5.4 3.5L7.3 4.7L5.9 7L6.9 8.2L1.4 14.6L.7 14.4L2 9.5L1 9L2.2 6.6L.4 5.9L.8 3.4Z" fill="url(#gy)" stroke="#d8651a" stroke-width=".9" stroke-linejoin="round"/></svg><span class="c0" style="left:22px;width:227px">VIN12</span><span class="cv" style="left:249px;width:80px">1.160 V</span><span class="cv" style="left:329px;width:80px">1.152 V</span><span class="cv" style="left:409px;width:80px">1.160 V</span></div>
<div class="r" style="top:277px"><svg class="ic" style="left:10px;top:2px" width="8" height="15" viewBox="0 0 8 15"><path d="M1.5 .6H7.5L5.4 3.5L7.3 4.7L5.9 7L6.9 8.2L1.4 14.6L.7 14.4L2 9.5L1 9L2.2 6.6L.4 5.9L.8 3.4Z" fill="url(#gy)" stroke="#d8651a" stroke-width=".9" stroke-linejoin="round"/></svg><span class="c0" style="left:22px;width:227px">VIN13</span><span class="cv" style="left:249px;width:80px">0.688 V</span><span class="cv" style="left:329px;width:80px">0.688 V</span><span class="cv" style="left:409px;width:80px">0.688 V</span></div>
<div class="r a" style="top:295px"><svg class="ic" style="left:10px;top:2px" width="8" height="15" viewBox="0 0 8 15"><path d="M1.5 .6H7.5L5.4 3.5L7.3 4.7L5.9 7L6.9 8.2L1.4 14.6L.7 14.4L2 9.5L1 9L2.2 6.6L.4 5.9L.8 3.4Z" fill="url(#gy)" stroke="#d8651a" stroke-width=".9" stroke-linejoin="round"/></svg><span class="c0" style="left:22px;width:227px">VIN14</span><span class="cv" style="left:249px;width:80px">1.528 V</span><span class="cv" style="left:329px;width:80px">1.528 V</span><span class="cv" style="left:409px;width:80px">1.536 V</span></div>
<div class="r" style="top:313px"><svg class="ic" style="left:9px;top:3px" width="12" height="12" viewBox="0 0 12 12"><rect x=".3" y=".3" width="11.4" height="11.4" rx="1.6" fill="#474747"/><g stroke="#e8e8e8" stroke-width="1.3"><path d="M6 1.4V4.2M6 7.8V10.6M1.4 6H4.2M7.8 6H10.6M2.7 2.7L4.7 4.7M7.3 7.3L9.3 9.3M9.3 2.7L7.3 4.7M4.7 7.3L2.7 9.3"/></g><circle cx="6" cy="6" r="1.6" fill="#cfd6da" stroke="#d06060" stroke-width=".5"/></svg><span class="c0" style="left:22px;width:227px">CPUFANIN0</span><span class="cv" style="left:249px;width:80px">1,394 RPM</span><span class="cv" style="left:329px;width:80px">1,239 RPM</span><span class="cv" style="left:409px;width:80px">1,400 RPM</span></div>
<div class="r a" style="top:331px"><span class="c0" style="left:22px;width:227px"></span><span class="cv" style="left:249px;width:80px"></span><span class="cv" style="left:329px;width:80px"></span><span class="cv" style="left:409px;width:80px"></span></div>
<div class="r s" style="top:349px"><svg class="ic" style="left:8px;top:2px" width="12" height="14" viewBox="0 0 12 14"><path d="M0 2.5H12M0 5.5H12M0 8.5H12M0 11.5H12" stroke="#bdbdbd" stroke-width="1"/><rect x="2" y="0" width="8.2" height="14" rx=".8" fill="url(#gk)"/></svg><span class="c0" style="left:22px;width:227px">MSI A320M GRENADE (MS-7A39) (Ric...</span><span class="cv" style="left:249px;width:80px"></span><span class="cv" style="left:329px;width:80px"></span><span class="cv" style="left:409px;width:80px"></span></div>
<div class="r a" style="top:367px"><svg class="ic" style="left:10px;top:2px" width="8" height="15" viewBox="0 0 8 15"><path d="M1.5 .6H7.5L5.4 3.5L7.3 4.7L5.9 7L6.9 8.2L1.4 14.6L.7 14.4L2 9.5L1 9L2.2 6.6L.4 5.9L.8 3.4Z" fill="url(#gy)" stroke="#d8651a" stroke-width=".9" stroke-linejoin="round"/></svg><span class="c0" style="left:22px;width:227px">VDD Voltage</span><span class="cv" style="left:249px;width:80px">0.525 V</span><span class="cv" style="left:329px;width:80px">0.519 V</span><span class="cv" style="left:409px;width:80px">0.594 V</span></div>
<div class="r" style="top:385px"><svg class="ic" style="left:10px;top:2px" width="8" height="15" viewBox="0 0 8 15"><path d="M1.5 .6H7.5L5.4 3.5L7.3 4.7L5.9 7L6.9 8.2L1.4 14.6L.7 14.4L2 9.5L1 9L2.2 6.6L.4 5.9L.8 3.4Z" fill="url(#gy)" stroke="#d8651a" stroke-width=".9" stroke-linejoin="round"/></svg><span class="c0" style="left:22px;width:227px">NB Voltage</span><span class="cv" style="left:249px;width:80px">0.538 V</span><span class="cv" style="left:329px;width:80px">0.538 V</span><span class="cv" style="left:409px;width:80px">0.544 V</span></div>
<div class="r a" style="top:403px"><svg class="ic" style="left:10px;top:2px" width="8" height="15" viewBox="0 0 8 15"><path d="M1.5 .6H7.5L5.4 3.5L7.3 4.7L5.9 7L6.9 8.2L1.4 14.6L.7 14.4L2 9.5L1 9L2.2 6.6L.4 5.9L.8 3.4Z" fill="url(#gy)" stroke="#d8651a" stroke-width=".9" stroke-linejoin="round"/></svg><span class="c0" style="left:22px;width:227px">VDD Current</span><span class="cv" style="left:249px;width:80px">25.412 A</span><span class="cv" style="left:329px;width:80px">9.176 A</span><span class="cv" style="left:409px;width:80px">38.118 A</span></div>
<div class="r" style="top:421px"><svg class="ic" style="left:10px;top:2px" width="8" height="15" viewBox="0 0 8 15"><path d="M1.5 .6H7.5L5.4 3.5L7.3 4.7L5.9 7L6.9 8.2L1.4 14.6L.7 14.4L2 9.5L1 9L2.2 6.6L.4 5.9L.8 3.4Z" fill="url(#gy)" stroke="#d8651a" stroke-width=".9" stroke-linejoin="round"/></svg><span class="c0" style="left:22px;width:227px">NB Current</span><span class="cv" style="left:249px;width:80px">28.941 A</span><span class="cv" style="left:329px;width:80px">23.294 A</span><span class="cv" style="left:409px;width:80px">32.471 A</span></div>
<div class="r a" style="top:439px"><svg class="ic" style="left:10px;top:2px" width="8" height="15" viewBox="0 0 8 15"><path d="M1.5 .6H7.5L5.4 3.5L7.3 4.7L5.9 7L6.9 8.2L1.4 14.6L.7 14.4L2 9.5L1 9L2.2 6.6L.4 5.9L.8 3.4Z" fill="url(#gy)" stroke="#d8651a" stroke-width=".9" stroke-linejoin="round"/></svg><span class="c0" style="left:22px;width:227px">VDD Power</span><span class="cv" style="left:249px;width:80px">13.341 W</span><span class="cv" style="left:329px;width:80px">4.762 W</span><span class="cv" style="left:409px;width:80px">22.642 W</span></div>
<div class="r" style="top:457px"><svg class="ic" style="left:10px;top:2px" width="8" height="15" viewBox="0 0 8 15"><path d="M1.5 .6H7.5L5.4 3.5L7.3 4.7L5.9 7L6.9 8.2L1.4 14.6L.7 14.4L2 9.5L1 9L2.2 6.6L.4 5.9L.8 3.4Z" fill="url(#gy)" stroke="#d8651a" stroke-width=".9" stroke-linejoin="round"/></svg><span class="c0" style="left:22px;width:227px">NB Power</span><span class="cv" style="left:249px;width:80px">15.570 W</span><span class="cv" style="left:329px;width:80px">12.532 W</span><span class="cv" style="left:409px;width:80px">17.664 W</span></div>
</div>
<div class="tb2"><div class="tbtn" style="left:0px"><svg width="30" height="18" viewBox="0 0 30 18"><path d="M0 9L7 2V6H13V12H7V16Z M30 9L23 2V6H17V12H23V16Z"/></svg></div><div class="tbtn" style="left:44px"><svg width="30" height="18" viewBox="0 0 30 18"><path d="M14 9L7 2V6H1V12H7V16Z M16 9L23 2V6H29V12H23V16Z"/></svg></div></div>
</div>
<div id="cm" class="win cz" style="left:0;top:2px;width:286px;height:400px;box-shadow:inset -1px -1px 0 #fff,0 0 0 1px rgba(0,0,0,.2),0 7px 26px 2px rgba(0,0,0,.33)">
<div class="tbar"><i class="wmin" style="left:167px;top:12px;background:#444"></i><i class="wmax" style="left:212px;top:7px;border-color:#cfcfcf"></i><svg class="wx" style="left:258px;top:7px" width="10" height="10"><path style="stroke:#555" d="M0 0L10 10M10 0L0 10"/></svg></div>
<div class="tp" style="left:-20px;top:48px;width:303px;height:325px"></div><div class="tab" style="left:-22px;top:31px;width:60px">Mainboard</div><div class="tab on" style="left:40px;top:29px;width:52.5px">Memory</div><div class="tab" style="left:95px;top:31px;width:36px">SPD</div><div class="tab" style="left:134px;top:31px;width:50.5px">Graphics</div><div class="tab" style="left:187px;top:31px;width:40px">Bench</div><div class="tab" style="left:230px;top:31px;width:39px">About</div>
<div class="gb" style="left:-20px;top:57px;width:286px;height:71px"></div><div class="f" style="left:-136px;top:67px;width:185px;height:15px;text-align:right;padding-right:34px">DDR4</div><div class="f" style="left:-136px;top:85px;width:185px;height:15px;text-align:right;padding-right:28px">8192 MBytes</div><div class="lb" style="left:40px;top:67.4px;width:100px;height:15px">Channel #</div><div class="f" style="left:148px;top:67.4px;width:100px;height:15px">Dual</div><div class="lb dis" style="left:40px;top:85.4px;width:100px;height:15px">DC Mode</div><div class="f" style="left:148px;top:85.4px;width:100px;height:15px"></div><div class="lb" style="left:40px;top:103.4px;width:100px;height:15px">NB Frequency</div><div class="f" style="left:148px;top:103.4px;width:100px;height:15px">1599.1 MHz</div>
<div class="gb" style="left:-20px;top:136.5px;width:208px;height:213.5px"></div><div class="lb" style="left:-120px;top:145.4px;width:189px;height:15px">DRAM Frequency</div><div class="f" style="left:81px;top:145.4px;width:85px;height:15px">1599.1 MHz</div><div class="lb" style="left:-120px;top:163.3px;width:189px;height:15px">FSB:DRAM</div><div class="f" style="left:81px;top:163.3px;width:85px;height:15px">1:16</div><div class="lb" style="left:-120px;top:181.2px;width:189px;height:15px">CAS# Latency (CL)</div><div class="f" style="left:81px;top:181.2px;width:85px;height:15px">16.0 clocks</div><div class="lb" style="left:-120px;top:199.1px;width:189px;height:15px">RAS# to CAS# Delay (tRCD)</div><div class="f" style="left:81px;top:199.1px;width:85px;height:15px">18 clocks</div><div class="lb" style="left:-120px;top:217px;width:189px;height:15px">RAS# Precharge (tRP)</div><div class="f" style="left:81px;top:217px;width:85px;height:15px">18 clocks</div><div class="lb" style="left:-120px;top:234.9px;width:189px;height:15px">Cycle Time (tRAS)</div><div class="f" style="left:81px;top:234.9px;width:85px;height:15px">36 clocks</div><div class="lb" style="left:-120px;top:252.8px;width:189px;height:15px">Bank Cycle Time (tRC)</div><div class="f" style="left:81px;top:252.8px;width:85px;height:15px">75 clocks</div><div class="lb" style="left:-120px;top:270.7px;width:189px;height:15px">Command Rate (CR)</div><div class="f" style="left:81px;top:270.7px;width:85px;height:15px">1T</div><div class="lb dis" style="left:-120px;top:288.6px;width:189px;height:15px">DRAM Idle Timer</div><div class="f" style="left:81px;top:288.6px;width:85px;height:15px"></div><div class="lb dis" style="left:-120px;top:306.5px;width:189px;height:15px">Total CAS# (tRDRAM)</div><div class="f" style="left:81px;top:306.5px;width:85px;height:15px"></div><div class="lb dis" style="left:-120px;top:324.4px;width:189px;height:15px">Row To Column (tRCD)</div><div class="f" style="left:81px;top:324.4px;width:85px;height:15px"></div>
<div class="lb" style="left:-61px;top:383px;width:104px;height:15px;letter-spacing:.2px">Ver. 1.80.0.x64</div><div class="btn" style="left:53.5px;top:375.5px;width:57px;height:21.5px">Tools</div><div class="btn" style="left:110px;top:375.5px;width:18px;height:21.5px"></div><i class="arr" style="left:115px;top:384px"></i><div class="btn" style="left:131px;top:375.5px;width:74.5px;height:21.5px">Validate</div><div class="btn" style="left:208.5px;top:375.5px;width:74.5px;height:21.5px">Close</div></div>
<div id="st" class="win">
<div class="tbar"><svg class="ic" style="left:9px;top:5px" width="15" height="18" viewBox="0 0 15 18"><defs><radialGradient id="fl" cx="5.6" cy="15" r="8.5" gradientUnits="userSpaceOnUse"><stop offset="0" stop-color="#fff200"/><stop offset=".2" stop-color="#ffc400"/><stop offset=".48" stop-color="#ff6a18"/><stop offset="1" stop-color="#ffa028"/></radialGradient></defs><path d="M3.3 1.2C5 4 6.5 7.5 8.4 9.3C9.3 7.5 10 6 10.5 4C10.9 5.5 11 7 11.3 8C12 7.2 12.8 6.4 13.7 5.9C13.6 8 13.4 10 12.7 11.5C12 13 11 14 10 14.7C8.5 16 7 17.1 5.5 17.1C4.8 17 4.3 16.4 4.1 15.7C3 15.6 1.8 14.5.9 13.3C1.6 13.3 2.4 12.8 2.8 12C2 11.4 1.4 10.4.9 9.3C2 9.8 3 9.9 3.9 9.6C3.9 6.5 3.8 3.8 3.3 1.2Z" fill="url(#fl)"/></svg><span class="ttl" style="left:29px;top:7px">System Stability Test - AIDA64</span><i class="wmin" style="left:657px;top:14px"></i><i class="wmax" style="left:702px;top:9px"></i></div>
<div style="left:7px;top:39px;width:740px;height:440px;background:#fff"></div><div style="left:20px;top:52px;width:16px;height:12px;background:#d8dcd8;border:2px solid #3d6e4a"></div><div style="left:43px;top:55.5px;width:13px;height:13px;background:#fff;border:1px solid #333"></div><div style="left:59px;top:54px;width:120px;height:16px;line-height:16px;word-spacing:3px">Stress CPU</div><div style="left:183px;top:53px;width:458px;height:120px;background:#fff;border:1px solid #7a8594"></div><div style="left:184px;top:116px;width:437px;height:19.5px;background:#f0f0f0"></div><div style="left:184px;top:97px;width:456px;height:1px;background:#f0f0f0"></div><div style="left:184px;top:116px;width:456px;height:1px;background:#f0f0f0"></div><div style="left:184px;top:135px;width:456px;height:1px;background:#f0f0f0"></div><div style="left:184px;top:154px;width:456px;height:1px;background:#f0f0f0"></div><div style="left:621px;top:54px;width:1px;height:118px;background:#ececec"></div><div style="left:621px;top:54px;width:1px;height:24px;background:#dcdcdc"></div><div style="left:280px;top:79.5px;width:170px;height:19px;line-height:19px;text-align:right;letter-spacing:-.3px">Stability Test: Started</div><div style="left:287.5px;top:98.5px;width:170px;height:19px;line-height:19px;text-align:right;letter-spacing:-.3px">Stability Test: Stopped</div><div style="left:280px;top:117.5px;width:170px;height:19px;line-height:19px;text-align:right;letter-spacing:-.3px">Stability Test: Started</div><div style="left:378px;top:182px;width:22px;height:21px;background:#f0f0f0;border:1px solid #d9d9d9"></div><div class="blk" style="left:383px;top:202px;width:360px;height:108px"></div><div class="blk" style="left:383px;top:314px;width:360px;height:108px"></div><div style="left:400px;top:211px;width:200px;height:16px;color:#f0d8a0;line-height:16px;font-size:11px;letter-spacing:-.25px">Samsung SSD 850 PRO 128GB</div><div style="left:378px;top:323px;width:40px;height:16px;color:#d8d8d8;line-height:16px;text-align:right;width:37px;font-size:11px">Usage</div><svg style="left:393px;top:203px" width="333" height="107" viewBox="1000 705 333 107"><path class="g" d="M1006.5 735V783M1016.5 735V783M1026.5 735V783M1036.5 735V783M1046.5 735V783M1056.5 735V783M1066.5 735V783M1076.5 735V783M1086.5 735V783M1096.5 735V783M1106.5 735V783M1116.5 735V783M1126.5 735V783M1136.5 735V783M1146.5 735V783M1156.5 735V783M1166.5 735V783M1176.5 735V783M1186.5 735V783M1196.5 735V783M1206.5 735V783M1216.5 735V783M1226.5 735V783M1236.5 735V783M1246.5 735V783M1256.5 735V783M1266.5 735V783M1276.5 735V783M1286.5 735V783M1296.5 735V783M1306.5 735V783M1000 743.5H1310M1000 748.5H1310M1000 753.5H1310M1000 758.5H1310M1000 763.5H1310M1000 768.5H1310M1000 772.5H1310M1000 777.5H1310M1000 782.5H1310"/><path d="M1076 767.5H1310" stroke="#ffff00" stroke-width="1.6" fill="none"/><path d="M1076 762.5L1078.5 760L1081 762L1084 763.5L1087 764L1089.5 760.5L1092 762.5L1095 763L1097.5 760L1100 762L1102.5 759.5L1105 762.5L1108 761L1110 762L1112 759.5H1126V758.5H1148V757.5H1198V756.5H1310" stroke="#c6d4ee" stroke-width="1" fill="none"/><path d="M1105.5 735V783M1111.5 735V783" stroke="#fff" stroke-width="1" stroke-dasharray="3 2" fill="none"/><path d="M1109.5 735V783" stroke="#fff" stroke-width="1" fill="none"/><g font-family="Liberation Sans,sans-serif" font-size="11"><text x="1313" y="760.5" fill="#c6d4ee">56</text><text x="1313" y="772.5" fill="#ffff00">33</text><g fill="#fff" font-size="10.5"><text x="1063.5" y="797.5">10:54:55</text><text x="1069.5" y="797.5">10:55:05</text><text x="1111.5" y="797.5">10:54:57</text></g></g></svg><svg style="left:393px;top:314px" width="333" height="108" viewBox="1000 816 333 108"><path class="g" d="M1010.5 847V893M1020.5 847V893M1030.5 847V893M1040.5 847V893M1050.5 847V893M1060.5 847V893M1070.5 847V893M1080.5 847V893M1090.5 847V893M1100.5 847V893M1110.5 847V893M1120.5 847V893M1130.5 847V893M1140.5 847V893M1150.5 847V893M1160.5 847V893M1170.5 847V893M1180.5 847V893M1190.5 847V893M1200.5 847V893M1210.5 847V893M1220.5 847V893M1230.5 847V893M1240.5 847V893M1250.5 847V893M1260.5 847V893M1270.5 847V893M1280.5 847V893M1290.5 847V893M1300.5 847V893M1310.5 847V893M1310.5 847V893M1000 852.5H1311M1000 857.5H1311M1000 862.5H1311M1000 867.5H1311M1000 873.5H1311M1000 878.5H1311M1000 883.5H1311M1000 888.5H1311M1000 893.5H1311"/><path d="M1000 847H1311" stroke="#ffff00" stroke-width="1.4" fill="none"/><text x="1313" y="851.5" fill="#ffff00" font-family="Liberation Sans,sans-serif" font-size="11">100%</text></svg><div class="blk" style="left:373px;top:437px;width:80px;height:24px;color:#1fe01f;text-align:right;padding-right:21px;line-height:24px;letter-spacing:-.4px">10:55:05</div><div style="left:476px;top:439px;width:80px;height:20px;line-height:20px;letter-spacing:-.27px">Elapsed Time:</div><div class="blk" style="left:561px;top:437px;width:80px;height:24px;color:#1fe01f;text-align:center;line-height:24px;letter-spacing:-.4px">00:08:17</div></div>
<div id="cs" class="win cz" style="left:600px;top:563px;width:401px;height:400px;box-shadow:0 0 0 1px #3c86c8,0 7px 26px 2px rgba(0,0,0,.33)">
<div class="tbar"><svg class="ic" style="left:3px;top:4px" width="16" height="16" viewBox="0 0 16 16"><rect width="16" height="16" fill="#31087a"/><rect x="4.5" y="4.5" width="7" height="7" rx="1" fill="none" stroke="#fff" stroke-width="1.1"/><path d="M5.6 5.6L10.4 10.4M10.4 5.6L5.6 10.4" stroke="#fff" stroke-width="1"/><rect x="7" y="7" width="2" height="2" fill="#fff"/><rect x="6.6" y="6.6" width="2.8" height="2.8" fill="none" stroke="#31087a" stroke-width=".8"/><path d="M4.8 2.4h1.1M6.9 2.4h1.1M9 2.4h1.1M5.9 13.5h1.1M7.9 13.5h1.1M10 13.5h1.1" stroke="#fff" stroke-width="1.1"/><path d="M2.4 4.8v1.1M2.4 6.9v1.1M2.4 9v1.1M13.5 5.9v1.1M13.5 7.9v1.1M13.5 10v1.1" stroke="#fff" stroke-width="1.1"/></svg><span style="left:24px;top:5px;font:12px 'Liberation Sans',sans-serif;word-spacing:0;letter-spacing:0;line-height:16px">CPU-Z</span><i class="wmin" style="left:282px;top:12px;background:#111"></i><i class="wmax" style="left:327px;top:7px;border-color:#cfcfcf"></i><svg class="wx" style="left:373px;top:6.5px" width="11" height="11"><path style="stroke:#111;stroke-width:1.2" d="M0.5 0.5L10.5 10.5M10.5 0.5L0.5 10.5"/></svg></div>
<div class="tp" style="left:4.5px;top:48px;width:393px;height:325.5px"></div><div class="tab" style="left:7px;top:31px;width:38px">CPU</div><div class="tab" style="left:48.5px;top:31px;width:44.5px">Caches</div><div class="tab" style="left:95.5px;top:31px;width:59.5px">Mainboard</div><div class="tab" style="left:157.5px;top:31px;width:44px">Memory</div><div class="tab on" style="left:204.5px;top:29px;width:44.5px">SPD</div><div class="tab" style="left:251.5px;top:31px;width:48.5px">Graphics</div><div class="tab" style="left:303px;top:31px;width:39.5px">Bench</div><div class="tab" style="left:345px;top:31px;width:39.5px">About</div>
<div class="gb" style="left:9px;top:57.5px;width:384px;height:127px"></div><div class="gbl" style="left:14px;top:50.5px;width:109px;height:14px">Memory Slot Selection</div><div class="" style="left:16.5px;top:70px;width:85px;height:19.5px;background:#fff;border:1px solid;border-color:#696969 #fff #fff #696969;box-shadow:inset 1px 1px 0 #a0a0a0"></div><div class="" style="left:20px;top:74px;width:60px;height:14px;color:#1a1a9c;line-height:14px">Slot #1</div><div class="btn" style="left:84px;top:72px;width:16px;height:16px"></div><i class="arr" style="left:88px;top:78px"></i><div class="f fl" style="left:110px;top:72.5px;width:277px;height:14.5px">DDR4</div><div class="lb" style="left:0px;top:92px;width:100.5px;height:15px">Module Size</div><div class="f" style="left:110px;top:92px;width:124.5px;height:14.5px">4096 MBytes</div><div class="lb dis" style="left:220px;top:92px;width:82.5px;height:15px">Correction</div><div class="f" style="left:311.5px;top:92px;width:75.5px;height:14.5px"></div><div class="lb" style="left:0px;top:109.9px;width:100.5px;height:15px">Max Bandwidth</div><div class="f" style="left:110px;top:109.9px;width:124.5px;height:14.5px">DDR4-2132 (1066 MHz)</div><div class="lb dis" style="left:220px;top:109.9px;width:82.5px;height:15px">Registered</div><div class="f" style="left:311.5px;top:109.9px;width:75.5px;height:14.5px"></div><div class="lb" style="left:0px;top:127.8px;width:100.5px;height:15px">Manufacturer</div><div class="f" style="left:110px;top:127.8px;width:124.5px;height:14.5px">Samsung</div><div class="lb" style="left:220px;top:127.8px;width:82.5px;height:15px">Ranks</div><div class="f" style="left:311.5px;top:127.8px;width:75.5px;height:14.5px">Single</div><div class="lb" style="left:0px;top:145.7px;width:100.5px;height:15px">Part Number</div><div class="f" style="left:110px;top:145.7px;width:124.5px;height:14.5px">M378A5143DB0-CPB</div><div class="lb dis" style="left:220px;top:145.7px;width:82.5px;height:15px">SPD Ext.</div><div class="f" style="left:311.5px;top:145.7px;width:75.5px;height:14.5px"></div><div class="lb" style="left:0px;top:163.6px;width:100.5px;height:15px">Serial Number</div><div class="f" style="left:110px;top:163.6px;width:124.5px;height:14.5px">355F5574</div><div class="lb" style="left:220px;top:163.6px;width:82.5px;height:15px">Week/Year</div><div class="f" style="left:311.5px;top:163.6px;width:75.5px;height:14.5px">14 / 17</div>
<div class="gb" style="left:9px;top:193px;width:384px;height:163px"></div><div class="gbl" style="left:14px;top:186px;width:70px;height:14px">Timings Table</div><div class="lb" style="left:110px;top:195px;width:62px;height:15px;text-align:center">JEDEC #4</div><div class="lb" style="left:175.5px;top:195px;width:61px;height:15px;text-align:center">JEDEC #5</div><div class="lb" style="left:239px;top:195px;width:61.5px;height:15px;text-align:center">JEDEC #6</div><div class="lb" style="left:304.5px;top:195px;width:61.5px;height:15px;text-align:center">JEDEC #7</div><div class="lb" style="left:0px;top:212.8px;width:100.5px;height:15px;line-height:16px">Frequency</div><div class="f" style="left:110px;top:212.8px;width:62px;height:14.5px">945 MHz</div><div class="f" style="left:175.5px;top:212.8px;width:61px;height:14.5px">1018 MHz</div><div class="f" style="left:239px;top:212.8px;width:61.5px;height:14.5px">1066 MHz</div><div class="f" style="left:304.5px;top:212.8px;width:61.5px;height:14.5px">1066 MHz</div><div class="lb" style="left:0px;top:230.7px;width:100.5px;height:15px;line-height:16px">CAS# Latency</div><div class="f" style="left:110px;top:230.7px;width:62px;height:14.5px">13.0</div><div class="f" style="left:175.5px;top:230.7px;width:61px;height:14.5px">14.0</div><div class="f" style="left:239px;top:230.7px;width:61.5px;height:14.5px">15.0</div><div class="f" style="left:304.5px;top:230.7px;width:61.5px;height:14.5px">16.0</div><div class="lb" style="left:0px;top:248.6px;width:100.5px;height:15px;line-height:16px">RAS# to CAS#</div><div class="f" style="left:110px;top:248.6px;width:62px;height:14.5px">14</div><div class="f" style="left:175.5px;top:248.6px;width:61px;height:14.5px">14</div><div class="f" style="left:239px;top:248.6px;width:61.5px;height:14.5px">15</div><div class="f" style="left:304.5px;top:248.6px;width:61.5px;height:14.5px">15</div><div class="lb" style="left:0px;top:266.5px;width:100.5px;height:15px;line-height:16px">RAS# Precharge</div><div class="f" style="left:110px;top:266.5px;width:62px;height:14.5px">14</div><div class="f" style="left:175.5px;top:266.5px;width:61px;height:14.5px">14</div><div class="f" style="left:239px;top:266.5px;width:61.5px;height:14.5px">15</div><div class="f" style="left:304.5px;top:266.5px;width:61.5px;height:14.5px">15</div><div class="lb" style="left:0px;top:284.4px;width:100.5px;height:15px;line-height:16px">tRAS</div><div class="f" style="left:110px;top:284.4px;width:62px;height:14.5px">32</div><div class="f" style="left:175.5px;top:284.4px;width:61px;height:14.5px">34</div><div class="f" style="left:239px;top:284.4px;width:61.5px;height:14.5px">36</div><div class="f" style="left:304.5px;top:284.4px;width:61.5px;height:14.5px">36</div><div class="lb" style="left:0px;top:302.3px;width:100.5px;height:15px;line-height:16px">tRC</div><div class="f" style="left:110px;top:302.3px;width:62px;height:14.5px">45</div><div class="f" style="left:175.5px;top:302.3px;width:61px;height:14.5px">48</div><div class="f" style="left:239px;top:302.3px;width:61.5px;height:14.5px">50</div><div class="f" style="left:304.5px;top:302.3px;width:61.5px;height:14.5px">50</div><div class="lb dis" style="left:0px;top:320.2px;width:100.5px;height:15px;line-height:16px">Command Rate</div><div class="f" style="left:110px;top:320.2px;width:62px;height:14.5px"></div><div class="f" style="left:175.5px;top:320.2px;width:61px;height:14.5px"></div><div class="f" style="left:239px;top:320.2px;width:61.5px;height:14.5px"></div><div class="f" style="left:304.5px;top:320.2px;width:61.5px;height:14.5px"></div><div class="lb" style="left:0px;top:338.1px;width:100.5px;height:15px;line-height:16px">Voltage</div><div class="f" style="left:110px;top:338.1px;width:62px;height:14.5px">1.20 V</div><div class="f" style="left:175.5px;top:338.1px;width:61px;height:14.5px">1.20 V</div><div class="f" style="left:239px;top:338.1px;width:61.5px;height:14.5px">1.20 V</div><div class="f" style="left:304.5px;top:338.1px;width:61.5px;height:14.5px">1.20 V</div>
<div class="" style="left:8px;top:376px;width:70px;height:24px;font:italic bold 21px 'Liberation Sans',sans-serif;color:#a0a0a0;line-height:24px;letter-spacing:-.5px">CPU-Z</div><div class="" style="left:80.5px;top:382.5px;width:90px;height:16px;line-height:16px;letter-spacing:.2px">Ver. 1.80.0.x64</div><div class="btn" style="left:168px;top:375px;width:57.5px;height:21.5px">Tools</div><div class="btn" style="left:225px;top:375px;width:18px;height:21.5px"></div><i class="arr" style="left:230px;top:384px"></i><div class="btn" style="left:246.5px;top:375px;width:74.5px;height:21.5px">Validate</div><div class="btn" style="left:323.5px;top:375px;width:74.5px;height:21.5px">Close</div></div>
</body></html>
